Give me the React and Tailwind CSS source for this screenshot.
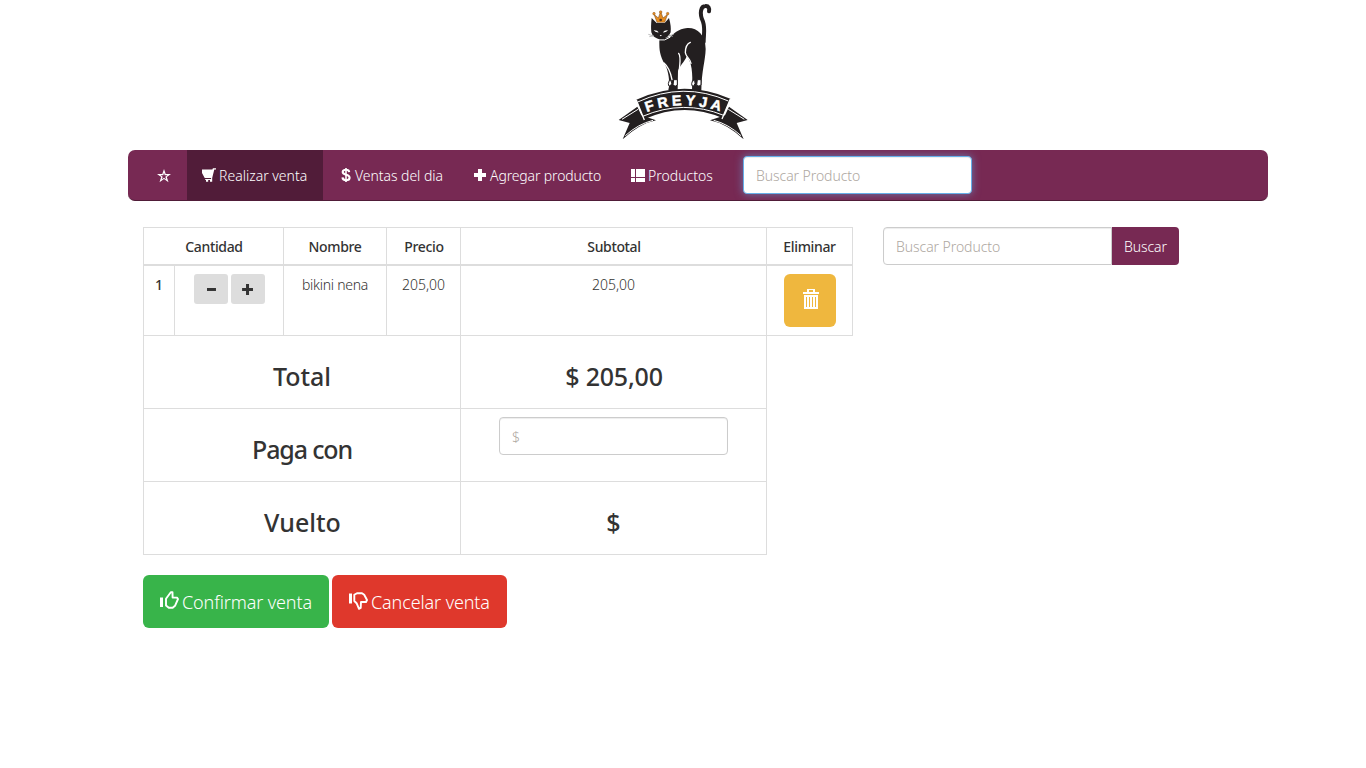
import React from "react";

function Glyph({ size = 14, d, className = "" }) {
  return (
    <svg width={size} height={size} viewBox="0 0 14 14" fill="currentColor" fillRule="evenodd" className={`shrink-0 ${className}`}>
      <path d={d} />
    </svg>
  );
}

const STAR = "M7 0 8.7 5H14L9.8 8.1 11.5 13.2 7 10.1 2.5 13.2 4.2 8.1 0 5H5.3ZM7 3.4 6.3 6.2H3.5L5.7 7.8 4.8 10.4 7 8.8 9.2 10.4 8.3 7.8 10.5 6.2H7.7Z";
const CART = "M0 .5H10.4L10.9 -.7H14V.5H12.3L10.2 9V11H3.2V10H9L9.2 9H2.7L0 4ZM4 11H6.2V12.8H4ZM8 11H10.2V12.8H8Z";
const PLUS = "M5 0H9V4H13V8H9V12H5V8H1V4H5Z";
const LIST = "M0 0H4V8H0ZM5 0H14V8H5ZM0 9H4V13H0ZM5 9H14V13H5Z";

function Logo() {
  return (
    <svg width="150" height="145" viewBox="0 0 450 435" className="shrink-0">
      <path d="M281 126C281 104 286 86 279 65C267 39 273 18 286 18C296 17 299 25 297 34" fill="none" stroke="#231f20" strokeWidth="12" strokeLinecap="round" />
      <path d="M148 116C148 142 147 158 160 185C175 207 177 231 178 255L175 270L203 272L204 213C207 200 225 184 230 169C245 188 249 215 246 270L274 272C275 210 286 184 287 147C287 104 260 82 232 84C205 86 188 104 181 111Z" fill="#231f20" />
      <path d="M125 54Q122 80 124 97Q129 115 152 119Q175 115 182 97Q184 78 177 54L164 69H140Z" fill="#231f20" />
      <g fill="none" stroke="white" strokeLinecap="round">
        <path d="M148 120Q163 124 180 112" strokeWidth="3" />
        <path d="M206 160C214 171 209 188 208 212M241 127C229 132 226 144 226 158C228 172 239 172 243 190M162 189C175 200 182 218 186 239" strokeWidth="4" />
      </g>
      <path d="M131 91Q142 90 146 97Q136 98 131 91ZM174 91Q163 90 159 97Q169 98 174 91ZM149 105H156L152 109Z" fill="white" />
      <path d="M115 103L131 108M118 110L132 107M174 108L192 103M175 106L189 110" stroke="#999" strokeWidth="2" />
      <path d="M141 67 132 43 145 54 152 34 159 54 173 43 164 67Z" fill="#e58c20" stroke="#6c421c" strokeWidth="1.5" />
      <g fill="#e58c20" stroke="#6c421c" strokeWidth="1"><circle cx="132" cy="41" r="4" /><circle cx="152" cy="36" r="4" /><circle cx="173" cy="41" r="4" /></g>
      <circle cx="152" cy="60" r="4" fill="#4f3520" />
      <g fill="white" stroke="#231f20" strokeWidth="3">
        <path d="M178 241Q187 241 185 251L181 258Q174 260 175 251ZM191 239H202V255Q197 261 189 256ZM248 241Q257 241 255 251L251 258Q244 260 245 251ZM262 239H273V255Q267 261 260 256Z" />
      </g>
      <g fill="#231f20">
        <path d="M26 360L82 320L94 346L138 361Q89 371 38 418L59 369Z" />
        <path d="M413 360L357 320L345 346L300 361Q350 371 401 418L380 369Z" />
        <path d="M79 299Q220 235 361 296L337 354Q220 304 102 358Z" />
      </g>
      <g fill="none" stroke="white" strokeWidth="3">
        <path d="M83 306Q220 243 355 303M98 349Q220 297 341 346M36 358L84 328M403 358L355 328M46 407Q84 372 129 361M393 407Q355 372 311 361" />
        <path d="M79 300L103 360M361 297L336 357" strokeWidth="4" />
      </g>
      <path id="banner-line" d="M110 336Q221 295 334 336" fill="none" />
      <text fill="white" stroke="white" strokeWidth="1.5" fontFamily="Liberation Sans, sans-serif" fontWeight="700" fontSize="43">
        <textPath href="#banner-line" textLength="224" lengthAdjust="spacing">FREYJA</textPath>
      </text>
    </svg>
  );
}

function NavItem({ icon, children, className = "" }) {
  return (
    <a className={`flex h-[50px] shrink-0 items-center gap-[3px] whitespace-nowrap pt-px pl-[15px] ${className}`}>
      {icon}
      <span>{children}</span>
    </a>
  );
}

function Field({ placeholder, className = "" }) {
  return (
    <input
      placeholder={placeholder}
      className={`h-[38px] w-[229px] shrink-0 border bg-white px-3 text-[14px] font-light tracking-[-0.07px] outline-none placeholder:text-[#aea79f] ${className}`}
    />
  );
}

function Cell({ className = "", children }) {
  return <div className={`border-r border-b border-[#ddd] pt-[9px] text-center leading-5 whitespace-nowrap ${className}`}>{children}</div>;
}

function SumRow({ label, labelClass = "", children }) {
  return (
    <div className="grid h-[73px] w-[624px] grid-cols-[317px_306px] border-l border-[#ddd]">
      <Cell className={`!pt-[26px] text-[25px] !leading-[28px] font-medium ${labelClass}`}>{label}</Cell>
      {children}
    </div>
  );
}

export default function App() {
  return (
    <div className="h-[768px] overflow-hidden bg-white font-['Noto_Sans',sans-serif] text-[14px] font-light text-[#333]">
      <header className="flex h-[150px] justify-center pl-1">
        <Logo />
      </header>

      <nav className="ml-[128px] flex h-[51px] w-[1140px] overflow-hidden rounded-[7px] border-b border-[#501c38] bg-[#772953] pl-[14px] text-white">
        <NavItem className="w-[45px]" icon={<Glyph d={STAR} />} />
        <NavItem className="w-[136px] bg-[#511c39]" icon={<Glyph d={CART} className="overflow-visible" />}>Realizar venta</NavItem>
        <NavItem
          className="w-[135px] tracking-[-0.05px]"
          icon={
            <svg width="14" height="14" viewBox="0 0 14 14" fill="none" stroke="currentColor" className="mb-[2px] shrink-0">
              <path d="M11.2 4.2C11 2.5 9.8 1.8 8 1.8C6 1.8 4.7 2.6 4.7 4.1C4.7 5.7 6 6.2 8 6.7C10.3 7.2 11.6 8 11.6 9.7C11.6 11.4 10.2 12.2 8 12.2C5.8 12.2 4.6 11.3 4.5 9.4" strokeWidth="2.1" />
              <path d="M8 0V14" strokeWidth="1.6" />
            </svg>
          }
        >
          Ventas del dia
        </NavItem>
        <NavItem className="w-[158px] tracking-[-0.13px]" icon={<Glyph d={PLUS} />}>Agregar producto</NavItem>
        <NavItem className="w-[127px]" icon={<Glyph d={LIST} />}>Productos</NavItem>
        <Field placeholder="Buscar Producto" className="mt-[6px] rounded border-[#66afe9] shadow-[inset_0_1px_1px_rgba(0,0,0,.075),0_0_8px_rgba(102,175,233,.6)]" />
      </nav>

      <main className="flex pt-[26px] pl-[143px]">
        <section className="w-[740px]">
          <div className="grid w-[710px] grid-cols-[140px_103px_74px_306px_86px] border-t border-l border-[#ddd] font-medium tracking-[-0.35px]">
            <Cell className="h-[38px] border-b-2 pl-px">Cantidad</Cell>
            <Cell className="border-b-2">Nombre</Cell>
            <Cell className="border-b-2 pl-px">Precio</Cell>
            <Cell className="border-b-2 pl-px">Subtotal</Cell>
            <Cell className="border-b-2">Eliminar</Cell>
          </div>
          <div className="grid h-[70px] w-[710px] grid-cols-[31px_109px_103px_74px_306px_86px] border-l border-[#ddd]">
            <Cell className="font-medium">1</Cell>
            <Cell className="flex justify-center gap-[3px] !pt-2">
              <button className="flex h-[30px] w-[34px] items-center justify-center rounded-[3px] bg-[#ddd]">
                <Glyph size={12} d="M2.3 5.8H12.8V9.3H2.3Z" />
              </button>
              <button className="flex h-[30px] w-[34px] items-center justify-center rounded-[3px] bg-[#ddd]">
                <Glyph size={12} d="M4.7 1.2H8.2V5.8H12.8V9.3H8.2V13.9H4.7V9.3H.1V5.8H4.7Z" />
              </button>
            </Cell>
            <Cell className="tracking-[-0.25px]">bikini nena</Cell>
            <Cell>205,00</Cell>
            <Cell>205,00</Cell>
            <Cell className="flex justify-center !pt-2">
              <button className="flex h-[53px] w-[52px] items-center justify-center rounded-md bg-[#efb73e] pb-[3px] pl-[2px] text-white">
                <svg width="16" height="20" viewBox="0 0 16 20" fill="currentColor" fillRule="evenodd">
                  <path d="M4 0H12V3H16V5H0V3H4ZM6 1V3H10V1ZM1 6H15V20H1ZM3 8V18H4V8ZM6 8V18H7V8ZM9 8V18H10V8ZM12 8V18H13V8Z" />
                </svg>
              </button>
            </Cell>
          </div>
          <SumRow label="Total">
            <Cell className="!pt-[26px] pl-px text-[25px] !leading-[28px] font-medium tracking-[-0.2px]">$ 205,00</Cell>
          </SumRow>
          <SumRow label="Paga con" labelClass="tracking-[-1.15px]">
            <Cell className="flex justify-center !pt-2">
              <Field placeholder="$" className="rounded border-[#ccc] shadow-[inset_0_1px_1px_rgba(0,0,0,.075)]" />
            </Cell>
          </SumRow>
          <SumRow label="Vuelto" labelClass="pl-px">
            <Cell className="!pt-[26px] text-[25px] !leading-[28px] font-medium">$</Cell>
          </SumRow>

          <div className="flex gap-[3px] pt-5 text-[18px] tracking-[-0.12px] whitespace-nowrap text-white">
            <button className="flex h-[53px] w-[186px] items-center gap-[3px] rounded-md bg-[#38b44a] pt-[2px] pl-[17px]">
              <svg width="19" height="18" viewBox="0 0 19 18" fill="none" stroke="currentColor" strokeWidth="1.9" strokeLinejoin="round" className="mb-[5px] shrink-0">
                <path d="M0 6.5H3V16H0Z" fill="currentColor" stroke="none" />
                <path d="M6 7.8 10.8 1.2 12.5 1.3 12.6 6.6H17L18 8 15 14.8 12.7 16.8H8.8L6 14.5Z" />
              </svg>
              <span>Confirmar venta</span>
            </button>
            <button className="flex h-[53px] w-[175px] items-center gap-[3px] rounded-md bg-[#df382c] pt-[2px] pl-[17px]">
              <svg width="19" height="18" viewBox="0 0 19 18" fill="none" stroke="currentColor" strokeWidth="1.9" strokeLinejoin="round" className="mb-[3px] shrink-0">
                <path d="M0 1.5H3V11.5H0Z" fill="currentColor" stroke="none" />
                <path d="M5.3 2.8 8 1.2H13L15.2 2.8 18 8 17 10H12L11.7 16 10 16.8 7.6 11.2 5.3 9Z" />
              </svg>
              <span>Cancelar venta</span>
            </button>
          </div>
        </section>

        <form className="flex h-[38px]">
          <Field placeholder="Buscar Producto" className="rounded-l border-[#ccc] shadow-[inset_0_1px_1px_rgba(0,0,0,.075)]" />
          <button type="button" className="w-[67px] rounded-r bg-[#772953] pt-px tracking-[-0.1px] text-white">Buscar</button>
        </form>
      </main>
    </div>
  );
}
